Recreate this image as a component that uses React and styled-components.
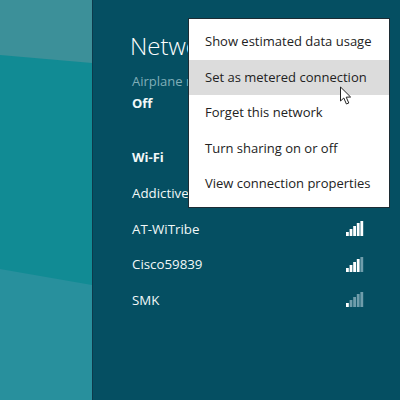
import React from 'react';
import styled, { createGlobalStyle } from 'styled-components';

const GlobalStyle = createGlobalStyle`
  html, body {
    margin: 0;
    padding: 0;
    background: #054f62;
  }
`;

const Screen = styled.div`
  position: relative;
  display: flex;
  width: 400px;
  height: 400px;
  overflow: hidden;
  font-family: 'Open Sans', 'Liberation Sans', sans-serif;
`;

const Wallpaper = styled.svg`
  display: block;
  flex: 0 0 92px;
  width: 92px;
  height: 400px;
`;

const Panel = styled.div`
  flex: 1;
  display: flex;
  flex-direction: column;
  padding: 32px 36px 0 39px;
  background: #054f62;
  border-left: 1px solid #0d3a4c;
  color: #f2f8f8;
`;

const Title = styled.div`
  font-size: 24px;
  font-weight: 300;
  line-height: 28px;
  margin-left: -2px;
  white-space: nowrap;
  color: #fff;
`;

const Label = styled.div`
  margin-top: 12px;
  font-size: 13px;
  line-height: 18px;
  color: #80aeb8;
  white-space: nowrap;
`;

const Strong = styled.div`
  margin-top: ${({ $top }) => $top}px;
  font-size: 13px;
  font-weight: 700;
  line-height: 18px;
  white-space: nowrap;
`;

const NetworkList = styled.div`
  display: flex;
  flex-direction: column;
  margin-top: 9px;
`;

const NetworkRow = styled.div`
  display: flex;
  align-items: center;
  justify-content: space-between;
  height: 35.7px;
  font-size: 13.3px;
`;

const Menu = styled.div`
  position: absolute;
  left: 188px;
  top: 18px;
  width: 202px;
  height: 190px;
  padding: 5px 0;
  box-sizing: border-box;
  background: #fff;
  border: 1px solid #1c2c34;
  color: #222;
`;

const MenuItem = styled.div`
  height: 35.6px;
  line-height: 35px;
  padding-left: 16px;
  font-size: 13px;
  font-weight: 500;
  white-space: nowrap;
  background: ${({ $active }) => ($active ? '#dcdcdc' : 'transparent')};
`;

const Cursor = styled.svg`
  position: absolute;
  left: 339px;
  top: 86px;
  width: 14px;
  height: 20px;
`;

const networks = [
  { name: 'Addictive', level: 5 },
  { name: 'AT-WiTribe', level: 5 },
  { name: 'Cisco59839', level: 4 },
  { name: 'SMK', level: 1 },
];

const menuItems = [
  'Show estimated data usage',
  'Set as metered connection',
  'Forget this network',
  'Turn sharing on or off',
  'View connection properties',
];

function Signal({ level }) {
  const bars = [4, 7, 10, 13, 15];
  return (
    <svg width="18" height="15" viewBox="0 0 18 15">
      {bars.map((h, i) => (
        <rect
          key={h}
          x={i * 3.6}
          y={15 - h}
          width="2.8"
          height={h}
          fill={i < level ? '#ffffff' : '#6f9dab'}
        />
      ))}
    </svg>
  );
}

export default function App() {
  return (
    <Screen>
      <GlobalStyle />
      <Wallpaper viewBox="0 0 92 400">
        <rect width="92" height="400" fill="#118b94" />
        <polygon points="0,0 92,0 92,63 0,55" fill="#3c9099" />
        <polygon points="0,269 92,285 92,400 0,400" fill="#28909d" />
      </Wallpaper>
      <Panel>
        <Title>Networks</Title>
        <Label>Airplane mode</Label>
        <Strong $top={4}>Off</Strong>
        <Strong $top={36}>Wi-Fi</Strong>
        <NetworkList>
          {networks.map((n) => (
            <NetworkRow key={n.name}>
              {n.name}
              <Signal level={n.level} />
            </NetworkRow>
          ))}
        </NetworkList>
      </Panel>
      <Menu>
        {menuItems.map((item, i) => (
          <MenuItem key={item} $active={i === 1}>
            {item}
          </MenuItem>
        ))}
      </Menu>
      <Cursor viewBox="0 0 14 20">
        <path
          d="M1.5 1 L1.5 15 L4.8 12 L7.4 18 L9.8 17 L7.2 11.2 L11.6 11 Z"
          fill="#fff"
          stroke="#222"
          strokeWidth="1"
          strokeLinejoin="round"
        />
      </Cursor>
    </Screen>
  );
}
